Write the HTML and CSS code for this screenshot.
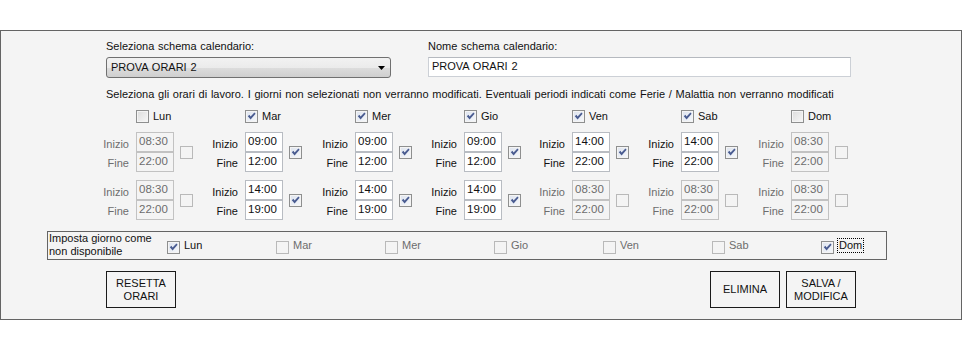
FILE: index.html
```html
<!DOCTYPE html>
<html lang="it">
<head>
    <meta charset="UTF-8">
    <meta name="viewport" content="width=device-width, initial-scale=1.0">
    <title>Schema calendario</title>
    <link rel="stylesheet" href="styles.css">
</head>
<body>
    <div class="panel">
        <div class="top-row">
            <div class="field field-schema">
                <p class="field-label">Seleziona schema calendario:</p>
                <div class="combo">
                    <span>PROVA ORARI 2</span>
                    <svg class="combo-arrow" width="7" height="4" viewBox="0 0 7 4"><path d="M0 0 H7 L3.5 4 Z" fill="#000"/></svg>
                </div>
            </div>
            <div class="field field-name">
                <p class="field-label">Nome schema calendario:</p>
                <div class="textbox">PROVA ORARI 2</div>
            </div>
        </div>

        <p class="hint">Seleziona gli orari di lavoro. I giorni non selezionati non verranno modificati. Eventuali periodi indicati come Ferie / Malattia non verranno modificati</p>

        <div class="week">
            <!-- intestazione giorni -->
            <div class="day-head"><span class="cb"></span>Lun</div>
            <div class="day-head"><span class="cb checked"><svg viewBox="0 0 11 11"><path d="M1.8 5.2 L3.4 3.8 L4.6 5.6 L8.4 1.6 L9.6 2.8 L4.6 8.6 Z"/></svg></span>Mar</div>
            <div class="day-head"><span class="cb checked"><svg viewBox="0 0 11 11"><path d="M1.8 5.2 L3.4 3.8 L4.6 5.6 L8.4 1.6 L9.6 2.8 L4.6 8.6 Z"/></svg></span>Mer</div>
            <div class="day-head"><span class="cb checked"><svg viewBox="0 0 11 11"><path d="M1.8 5.2 L3.4 3.8 L4.6 5.6 L8.4 1.6 L9.6 2.8 L4.6 8.6 Z"/></svg></span>Gio</div>
            <div class="day-head"><span class="cb checked"><svg viewBox="0 0 11 11"><path d="M1.8 5.2 L3.4 3.8 L4.6 5.6 L8.4 1.6 L9.6 2.8 L4.6 8.6 Z"/></svg></span>Ven</div>
            <div class="day-head"><span class="cb checked"><svg viewBox="0 0 11 11"><path d="M1.8 5.2 L3.4 3.8 L4.6 5.6 L8.4 1.6 L9.6 2.8 L4.6 8.6 Z"/></svg></span>Sab</div>
            <div class="day-head"><span class="cb"></span>Dom</div>

            <!-- primo turno -->
            <div class="slot off">
                <div class="slot-labels"><span>Inizio</span><span>Fine</span></div>
                <div class="slot-boxes"><span class="time">08:30</span><span class="time">22:00</span></div>
                <span class="cb"></span>
            </div>
            <div class="slot">
                <div class="slot-labels"><span>Inizio</span><span>Fine</span></div>
                <div class="slot-boxes"><span class="time">09:00</span><span class="time">12:00</span></div>
                <span class="cb checked"><svg viewBox="0 0 11 11"><path d="M1.8 5.2 L3.4 3.8 L4.6 5.6 L8.4 1.6 L9.6 2.8 L4.6 8.6 Z"/></svg></span>
            </div>
            <div class="slot">
                <div class="slot-labels"><span>Inizio</span><span>Fine</span></div>
                <div class="slot-boxes"><span class="time">09:00</span><span class="time">12:00</span></div>
                <span class="cb checked"><svg viewBox="0 0 11 11"><path d="M1.8 5.2 L3.4 3.8 L4.6 5.6 L8.4 1.6 L9.6 2.8 L4.6 8.6 Z"/></svg></span>
            </div>
            <div class="slot">
                <div class="slot-labels"><span>Inizio</span><span>Fine</span></div>
                <div class="slot-boxes"><span class="time">09:00</span><span class="time">12:00</span></div>
                <span class="cb checked"><svg viewBox="0 0 11 11"><path d="M1.8 5.2 L3.4 3.8 L4.6 5.6 L8.4 1.6 L9.6 2.8 L4.6 8.6 Z"/></svg></span>
            </div>
            <div class="slot">
                <div class="slot-labels"><span>Inizio</span><span>Fine</span></div>
                <div class="slot-boxes"><span class="time">14:00</span><span class="time">22:00</span></div>
                <span class="cb checked"><svg viewBox="0 0 11 11"><path d="M1.8 5.2 L3.4 3.8 L4.6 5.6 L8.4 1.6 L9.6 2.8 L4.6 8.6 Z"/></svg></span>
            </div>
            <div class="slot">
                <div class="slot-labels"><span>Inizio</span><span>Fine</span></div>
                <div class="slot-boxes"><span class="time">14:00</span><span class="time">22:00</span></div>
                <span class="cb checked"><svg viewBox="0 0 11 11"><path d="M1.8 5.2 L3.4 3.8 L4.6 5.6 L8.4 1.6 L9.6 2.8 L4.6 8.6 Z"/></svg></span>
            </div>
            <div class="slot off">
                <div class="slot-labels"><span>Inizio</span><span>Fine</span></div>
                <div class="slot-boxes"><span class="time">08:30</span><span class="time">22:00</span></div>
                <span class="cb"></span>
            </div>

            <!-- secondo turno -->
            <div class="slot off">
                <div class="slot-labels"><span>Inizio</span><span>Fine</span></div>
                <div class="slot-boxes"><span class="time">08:30</span><span class="time">22:00</span></div>
                <span class="cb"></span>
            </div>
            <div class="slot">
                <div class="slot-labels"><span>Inizio</span><span>Fine</span></div>
                <div class="slot-boxes"><span class="time">14:00</span><span class="time">19:00</span></div>
                <span class="cb checked"><svg viewBox="0 0 11 11"><path d="M1.8 5.2 L3.4 3.8 L4.6 5.6 L8.4 1.6 L9.6 2.8 L4.6 8.6 Z"/></svg></span>
            </div>
            <div class="slot">
                <div class="slot-labels"><span>Inizio</span><span>Fine</span></div>
                <div class="slot-boxes"><span class="time">14:00</span><span class="time">19:00</span></div>
                <span class="cb checked"><svg viewBox="0 0 11 11"><path d="M1.8 5.2 L3.4 3.8 L4.6 5.6 L8.4 1.6 L9.6 2.8 L4.6 8.6 Z"/></svg></span>
            </div>
            <div class="slot">
                <div class="slot-labels"><span>Inizio</span><span>Fine</span></div>
                <div class="slot-boxes"><span class="time">14:00</span><span class="time">19:00</span></div>
                <span class="cb checked"><svg viewBox="0 0 11 11"><path d="M1.8 5.2 L3.4 3.8 L4.6 5.6 L8.4 1.6 L9.6 2.8 L4.6 8.6 Z"/></svg></span>
            </div>
            <div class="slot off">
                <div class="slot-labels"><span>Inizio</span><span>Fine</span></div>
                <div class="slot-boxes"><span class="time">08:30</span><span class="time">22:00</span></div>
                <span class="cb unset"></span>
            </div>
            <div class="slot off">
                <div class="slot-labels"><span>Inizio</span><span>Fine</span></div>
                <div class="slot-boxes"><span class="time">08:30</span><span class="time">22:00</span></div>
                <span class="cb unset"></span>
            </div>
            <div class="slot off">
                <div class="slot-labels"><span>Inizio</span><span>Fine</span></div>
                <div class="slot-boxes"><span class="time">08:30</span><span class="time">22:00</span></div>
                <span class="cb"></span>
            </div>
        </div>

        <div class="group">
            <p class="group-label">Imposta giorno come<br>non disponibile</p>
            <div class="group-item"><span class="cb checked"><svg viewBox="0 0 11 11"><path d="M1.8 5.2 L3.4 3.8 L4.6 5.6 L8.4 1.6 L9.6 2.8 L4.6 8.6 Z"/></svg></span>Lun</div>
            <div class="group-item off"><span class="cb"></span>Mar</div>
            <div class="group-item off"><span class="cb"></span>Mer</div>
            <div class="group-item off"><span class="cb"></span>Gio</div>
            <div class="group-item off"><span class="cb"></span>Ven</div>
            <div class="group-item off"><span class="cb"></span>Sab</div>
            <div class="group-item"><span class="cb checked"><svg viewBox="0 0 11 11"><path d="M1.8 5.2 L3.4 3.8 L4.6 5.6 L8.4 1.6 L9.6 2.8 L4.6 8.6 Z"/></svg></span><span class="focus">Dom</span></div>
        </div>

        <div class="actions">
            <button class="btn">RESETTA<br>ORARI</button>
            <div class="actions-right">
                <button class="btn">ELIMINA</button>
                <button class="btn">SALVA /<br>MODIFICA</button>
            </div>
        </div>
    </div>
</body>
</html>
```

FILE: styles.css
```css
body{
    margin: 0;
    padding-top: 30px;
    font-family: "Liberation Sans", Arial, sans-serif;
    font-size: 11px;
    line-height: 13px;
    word-spacing: 0.7px;
    color: #111;
    background-color: #fff;
}
p{
    margin: 0;
}
.panel{
    box-sizing: border-box;
    width: 962px;
    height: 290px;
    padding: 9px 0 0 105px;
    border: 1px solid #646464;
    background-color: #f4f4f4;
}
.top-row{
    display: flex;
    gap: 37px;
}
.combo{
    box-sizing: border-box;
    display: flex;
    align-items: center;
    justify-content: space-between;
    width: 285px;
    height: 21px;
    margin-top: 4px;
    padding: 0 5px 0 4px;
    border: 1px solid #707070;
    border-radius: 3px;
    background: linear-gradient(#f2f2f2, #ebebeb 50%, #dddddd 51%, #cfcfcf);
}
.textbox{
    box-sizing: border-box;
    width: 423px;
    height: 20px;
    margin-top: 4px;
    padding: 2px 0 0 3px;
    border: 1px solid #ccd0d6;
    border-top-color: #b5b9bf;
    background-color: #fff;
}
.hint{
    margin-top: 10px;
}
.week{
    display: grid;
    grid-template-columns: 109px 110px 109px 108px 109px 110px 109px;
    grid-template-rows: 16px 40px 40px;
    row-gap: 8px;
    margin: 7px 0 0 -4px;
}
.day-head{
    display: flex;
    align-items: center;
    gap: 4px;
    padding-left: 34px;
}
.cb{
    box-sizing: border-box;
    display: inline-block;
    flex: none;
    width: 13px;
    height: 13px;
    border: 1px solid #8e8f8f;
    background: linear-gradient(135deg, #dcdcdc, #f7f7f7);
    box-shadow: inset 0 0 0 1px #f4f4f4;
}
.cb svg{
    display: block;
    width: 11px;
    height: 11px;
    fill: #4a5c91;
}
.cb.checked{
    background: linear-gradient(135deg, #dde3ee, #f6f8fb);
}
.slot{
    display: flex;
    align-items: center;
}
.slot-labels{
    display: flex;
    flex-direction: column;
    align-self: flex-start;
    gap: 6px;
    width: 27px;
    margin-right: 7px;
    padding-top: 6px;
    text-align: right;
    white-space: nowrap;
}
.slot-labels span{
    display: block;
    direction: rtl;
}
.slot-boxes{
    display: flex;
    flex-direction: column;
}
.time{
    box-sizing: border-box;
    display: block;
    width: 38px;
    height: 20px;
    padding: 2px 0 0 2px;
    border: 1px solid #b8bcc2;
    background-color: #fff;
    font-size: 11.5px;
}
.slot .cb{
    margin-left: 6px;
}
.slot.off .slot-labels,
.slot.off .time{
    color: #6d6d6d;
}
.slot.off .time{
    border-color: #c2c2c2;
    background-color: #f4f4f4;
}
.slot.off .cb,
.group-item.off .cb{
    border-color: #b9b9b9;
    background: #f4f4f4;
    box-shadow: none;
}
.cb.unset{
    border-color: #8e8f8f;
}
.group{
    box-sizing: border-box;
    display: flex;
    width: 840px;
    height: 29px;
    margin: 11px 0 0 -59px;
    border: 1px solid #646464;
}
.group-label{
    flex: none;
    width: 118px;
    padding-left: 1px;
    word-spacing: 0;
}
.group-item{
    display: flex;
    flex: none;
    align-items: flex-start;
    gap: 4px;
    width: 109px;
    padding-top: 7px;
}
.group-item:last-child{
    width: auto;
}
.group-item .cb{
    margin-top: 2px;
}
.group-item.off{
    color: #6d6d6d;
}
.focus{
    margin: -1px 0 0 -1px;
    padding: 0 1px;
    border: 1px dotted #000;
}
.actions{
    display: flex;
    width: 750px;
    margin-top: 11px;
}
.actions-right{
    display: flex;
    gap: 6px;
    margin-left: auto;
}
.btn{
    box-sizing: border-box;
    width: 70px;
    height: 37px;
    padding: 0;
    border: 1px solid #1a1a1a;
    background-color: #f4f4f4;
    font-family: "Liberation Sans", Arial, sans-serif;
    font-size: 11px;
    line-height: 13px;
    color: #111;
}
```
